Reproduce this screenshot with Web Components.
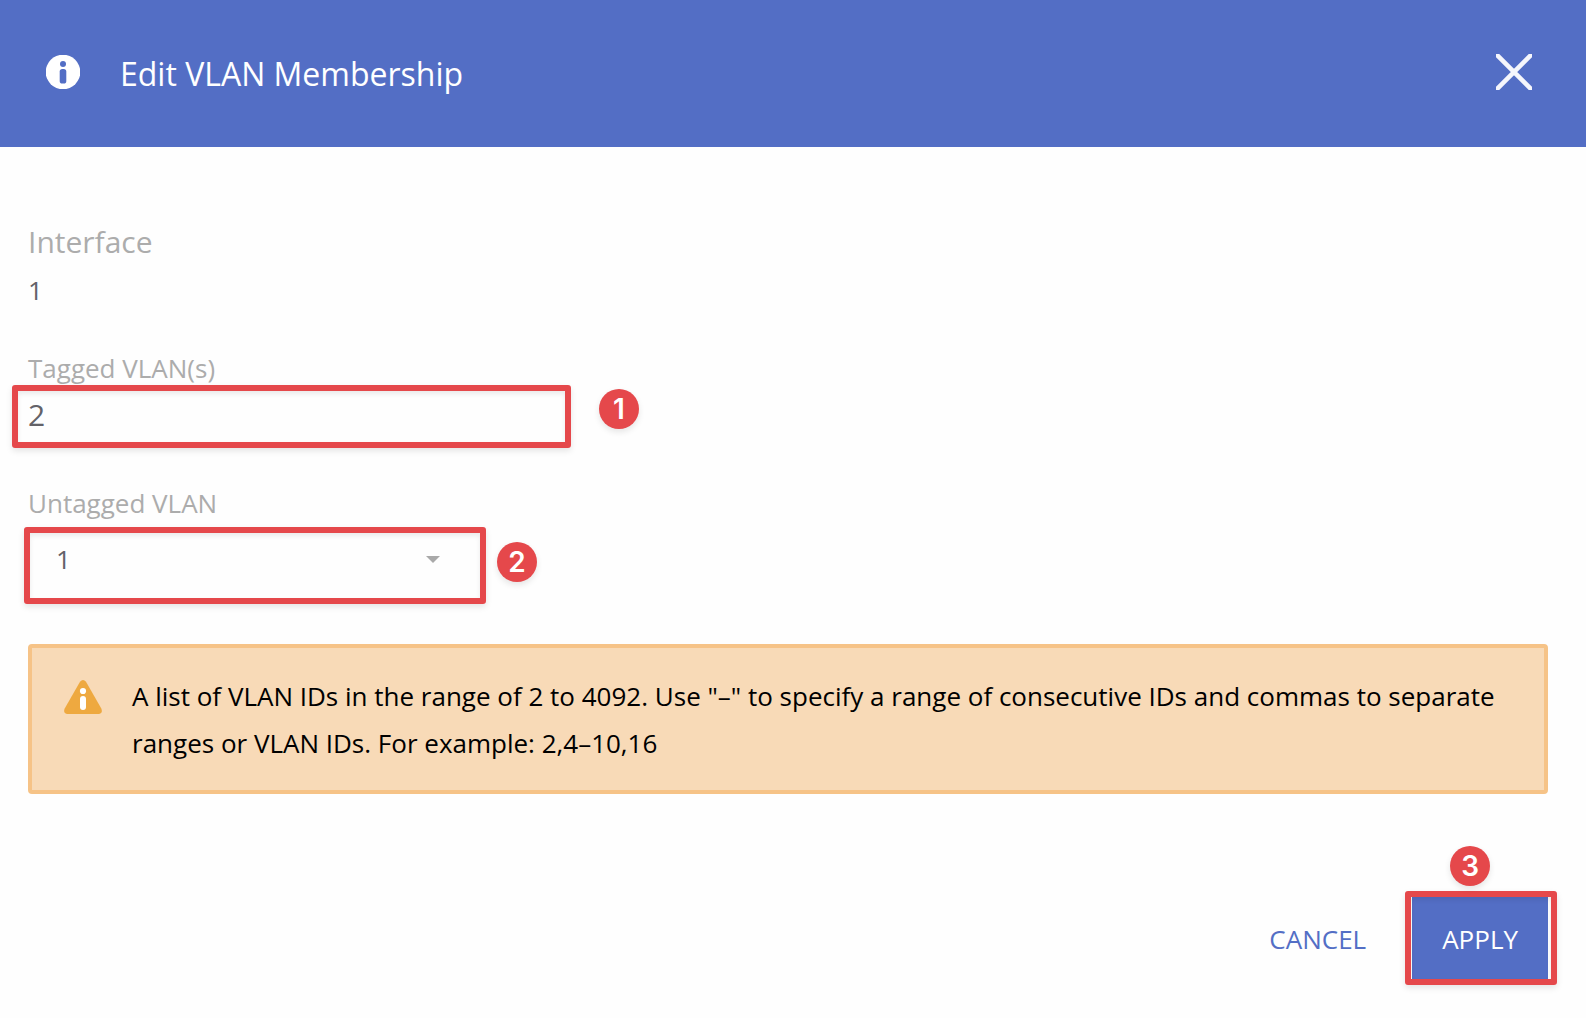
<!DOCTYPE html>
<html lang="en">
<head>
<meta charset="utf-8">
<meta name="viewport" content="width=device-width, initial-scale=1">
<title>Edit VLAN Membership</title>
<style>
  body { margin: 0; background: #fefefe; font-family: "Open Sans", "Liberation Sans", sans-serif; }
</style>
</head>
<body>
<vlan-dialog heading="Edit VLAN Membership">
  <static-field label="Interface">1</static-field>
  <text-field label="Tagged VLAN(s)" value="2" step="1"></text-field>
  <select-field label="Untagged VLAN" value="1" step="2"></select-field>
  <alert-box>A list of VLAN IDs in the range of 2 to 4092. Use "–" to specify a range of consecutive IDs and commas to separate ranges or VLAN IDs. For example: 2,4–10,16</alert-box>
  <dialog-actions slot="actions"></dialog-actions>
</vlan-dialog>

<script>
const define = (name, render) => customElements.define(name, class extends HTMLElement {
  connectedCallback() {
    if (this.shadowRoot) return;
    this.attachShadow({ mode: "open" }).innerHTML = render(key => this.getAttribute(key) || "");
  }
});

define("call-out", a => `
  <style>
    :host { display: block; position: relative; box-sizing: border-box; padding: 6px; }
    .frame {
      position: absolute; inset: 0; border: 6px solid #e5484b; border-radius: 3px; pointer-events: none;
      box-shadow: 0 3px 6px rgba(0,0,0,.1), inset 0 3px 5px rgba(0,0,0,.08);
    }
    .badge {
      position: absolute; left: var(--badge-x); top: var(--badge-y);
      width: 40px; height: 40px; border-radius: 50%; background: #e5484b; color: #fff;
      font: 600 28px/40px Inter, "Liberation Sans", sans-serif; text-align: center;
      box-shadow: 0 3px 6px rgba(0,0,0,.1);
    }
  </style>
  <slot></slot>
  <div class="frame"></div>
  <span class="badge">${a("step")}</span>`);

define("static-field", a => `
  <style>
    :host { display: block; }
    .label { color: #acacac; font-size: 30px; line-height: 40px; }
    .value { color: #636268; font-size: 26px; line-height: 40px; margin-top: 8px; }
  </style>
  <div class="label">${a("label")}</div>
  <div class="value"><slot></slot></div>`);

define("text-field", a => `
  <style>
    :host { display: block; margin-top: 41px; }
    label { display: block; color: #acacac; font-size: 26px; line-height: 34px; }
    call-out { width: 559px; max-width: 100%; margin-left: -16px; --badge-x: calc(100% + 28px); --badge-y: 4px; }
    input {
      display: block; box-sizing: border-box; width: 100%; height: 51px; padding: 0 10px 4px;
      border: 0; outline: 0; background: none; color: #636268; font: 30px "Open Sans", sans-serif;
    }
  </style>
  <label for="field">${a("label")}</label>
  <call-out step="${a("step")}"><input id="field" type="text" value="${a("value")}"></call-out>`);

define("select-field", a => `
  <style>
    :host { display: block; margin-top: 37px; }
    label { display: block; color: #acacac; font-size: 26px; line-height: 36px; }
    call-out { width: 462px; max-width: 100%; margin: 6px 0 0 -4px; --badge-x: calc(100% + 11px); --badge-y: 15px; }
    .control { display: grid; align-items: center; }
    .control > * { grid-area: 1 / 1; }
    select {
      appearance: none; width: 100%; height: 65px; padding: 0 60px 14px 26px; margin: 0;
      border: 0; outline: 0; background: none; color: #636268; font: 26px "Open Sans", sans-serif;
    }
    svg { justify-self: end; margin: 0 40px 12px 0; pointer-events: none; }
  </style>
  <label for="field">${a("label")}</label>
  <call-out step="${a("step")}">
    <div class="control">
      <select id="field"><option>${a("value")}</option></select>
      <svg width="14" height="7" viewBox="0 0 14 7" aria-hidden="true"><path d="M0 0h14L7 7z" fill="#a9a9a9"/></svg>
    </div>
  </call-out>`);

define("alert-box", () => `
  <style>
    :host {
      display: flex; align-items: flex-start; gap: 30px; margin-top: 40px; padding: 25px 32px 23px;
      border: 4px solid #f6c387; border-radius: 4px; background: #f8dab7;
    }
    svg { flex: none; margin-top: 7px; }
    p { margin: 0; color: #000; font-size: 26px; line-height: 47px; }
  </style>
  <svg width="38" height="34" viewBox="0 0 38 34" aria-hidden="true">
    <path d="M16 1.8Q19-1.8 22 1.8L37.3 28.5Q39.2 33.5 34.5 34H3.5Q-1.2 33.5.7 28.5z" fill="#eea940"/>
    <circle cx="19" cy="11" r="3.1" fill="#fff"/>
    <rect x="16" y="16" width="6" height="14" rx="3" fill="#fff"/>
  </svg>
  <p><slot></slot></p>`);

define("dialog-actions", () => `
  <style>
    :host { display: flex; justify-content: flex-end; align-items: center; gap: 39px; margin: 97px -9px 0 0; }
    button { border: 0; padding: 2px 0 0; background: none; color: #536ec5; font: 26px/36px "Open Sans", sans-serif; cursor: pointer; }
    call-out { --badge-x: 45px; --badge-y: -45px; padding: 6px 9px 6px 7px; }
    .apply { display: block; height: 82px; padding: 2px 30px 0; background: #536ec5; color: #fff; }
  </style>
  <button type="button">CANCEL</button>
  <call-out step="3"><button class="apply" type="submit">APPLY</button></call-out>`);

define("vlan-dialog", a => `
  <style>
    :host { display: block; }
    header { display: flex; align-items: center; box-sizing: border-box; height: 147px; padding: 0 54px 3px 46px; background: #536ec5; color: #fff; }
    h1 { flex: 1; margin: 0 0 0 40px; padding-top: 4px; font-size: 32px; font-weight: 400; line-height: 44px; }
    button { display: block; border: 0; padding: 0; background: none; color: inherit; cursor: pointer; }
    svg { display: block; }
    main { padding: 75px 38px 32px 28px; }
  </style>
  <header>
    <svg width="34" height="34" viewBox="0 0 34 34" aria-hidden="true">
      <circle cx="17" cy="17" r="17.3" fill="#fff"/>
      <circle cx="17" cy="9" r="3" fill="#536ec5"/>
      <rect x="13.7" y="14" width="6.6" height="14.5" rx="2.6" fill="#536ec5"/>
    </svg>
    <h1>${a("heading")}</h1>
    <button type="button" aria-label="Close">
      <svg width="36" height="36" viewBox="0 0 36 36" aria-hidden="true"><path d="M0 0l36 36M36 0L0 36" stroke="#f5f6fc" stroke-width="4.6"/></svg>
    </button>
  </header>
  <main><slot></slot><slot name="actions"></slot></main>`);
</script>
</body>
</html>
